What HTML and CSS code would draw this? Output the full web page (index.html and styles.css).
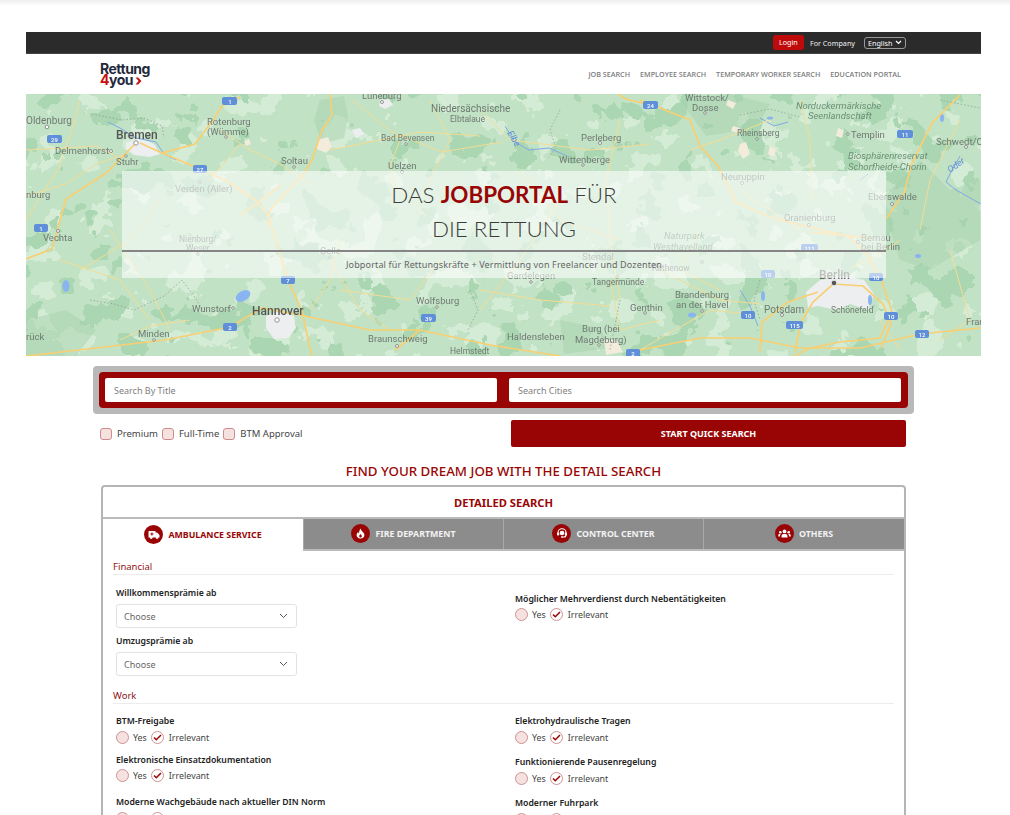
FILE: index.html
```html
<!DOCTYPE html>
<html lang="en">
  <head>
    <meta charset="UTF-8" />
    <title>Rettung4you</title>
    <link rel="stylesheet" href="styles.css">
  </head>
  <body>
    <div class="page">
      <div class="topbar">
        <a class="login">Login</a>
        <a class="company">For Company</a>
        <div class="lang">
          English
          <svg width="7" height="5" viewBox="0 0 7 5"><path d="M1 1l2.5 2.5L6 1" fill="none" stroke="#fff" stroke-width="1.2"/></svg>
        </div>
      </div>

      <header class="header">
        <div class="logo">
          <span>Rettung</span>
          <span><b>4</b>you<svg width="7" height="8" viewBox="0 0 7 8"><path d="M0.5 0.5h2.6L6.5 4 3.1 7.5H0.5L3.6 4z" fill="#c80f0f"/></svg></span>
        </div>
        <nav class="nav">
          <a>JOB SEARCH</a>
          <a>EMPLOYEE SEARCH</a>
          <a>TEMPORARY WORKER SEARCH</a>
          <a>EDUCATION PORTAL</a>
        </nav>
      </header>

      <section class="hero">
        <svg class="map" viewBox="26 94 955 262" width="955" height="262">
          <defs>
            <filter id="patchLight" x="0" y="0" width="100%" height="100%" color-interpolation-filters="sRGB">
              <feTurbulence type="fractalNoise" baseFrequency=".034" numOctaves="4" seed="11"/>
              <feColorMatrix type="matrix" values="0 0 0 0 .83  0 0 0 0 .92  0 0 0 0 .84  1 0 0 0 0"/>
              <feComponentTransfer><feFuncA type="discrete" tableValues="0 0 0 0 0 1 1 1"/></feComponentTransfer>
            </filter>
            <filter id="patchDark" x="0" y="0" width="100%" height="100%" color-interpolation-filters="sRGB">
              <feTurbulence type="fractalNoise" baseFrequency=".03" numOctaves="4" seed="31"/>
              <feColorMatrix type="matrix" values="0 0 0 0 .67  0 0 0 0 .84  0 0 0 0 .70  0 1 0 0 0"/>
              <feComponentTransfer><feFuncA type="discrete" tableValues="0 0 0 0 0 1 1 1"/></feComponentTransfer>
            </filter>
          </defs>
          <rect class="land" x="26" y="94" width="955" height="262"/>
          <rect x="26" y="94" width="955" height="262" filter="url(#patchLight)"/>
          <rect x="26" y="94" width="955" height="262" filter="url(#patchDark)"/>

          <!-- towns -->
          <path class="forest" d="M320 100l24-4 4 20-4 22-22 6-8-24zM880 200l40-40 30 30 30-10 0 60-50 30-30-10zM560 320l40 8 10 20-46 6zM26 320l40-10 30 20-20 26-50 0zM680 100l50-6 40 10-14 24-50 8z"/>
          <path class="urban" d="M126 143l14-5 14 6 6 10-10 3-16-2-8-6zM266 316l14-5 14 5 2 12-8 10-14 1-8-11zM806 292l14-12 24-4 20 4 10 14-6 16-18-6-14 6-18-4-10 2zM380 100l9-1 4 6-8 4-6-3zM352 130l8-2 4 6-8 4z"/>
          <path class="sand" d="M318 140l10-3 4 10-6 6-9-4zM244 141l5-2 2 5-5 2zM740 144l6-2 4 12-7 5-5-8zM770 146l6 3-2 8-6-3zM733 126l7 2-2 5-7-2zM728 100l8 3-3 6-7-4zM838 128l6 2-2 8-6-2zM604 340l12 0 7 12-17 3z"/>
          <!-- water -->
          <g class="lake">
            <ellipse cx="243" cy="296" rx="8" ry="5" transform="rotate(-30 243 296)"/>
            <ellipse cx="66" cy="286" rx="3.500" ry="6"/>
            <ellipse cx="692" cy="315" rx="4" ry="2.500"/>
            <ellipse cx="763" cy="296" rx="2" ry="5"/>
            <ellipse cx="870" cy="300" rx="2" ry="5"/>
            <ellipse cx="918" cy="256" rx="3" ry="2"/>
            <ellipse cx="942" cy="118" rx="2" ry="4"/>
            <ellipse cx="770" cy="118" rx="3" ry="1.500"/>
          </g>
          <path class="river" d="M108 122l12 6 16 10 20 4 8 12 12 6M505 126l10 16 14 8 20-2 18 8M960 156l-8 14-6 12 10 8 25 14M860 180l8-6M760 118l14 8 14-4M740 290l10 16 8 20"/>
          <path class="border" d="M92 114l30 6 22-2 18 8 2 12M90 300l24 4 20 6 30-14 18-16 12 16 10 16M560 110l-10 20 6 18-8 10M740 115l30-6 30 8M760 280l-6 20 6 20M620 300l-6 30-4 20M470 290l8 20-10 20M940 100l40 8"/>
          <!-- roads -->
          <path class="road-minor" d="M26 150l40-2 30-2 20 10M80 100l-8 30-14 40-20 30-12 20M26 196l40-12 30-20 30-10M110 230l40 60 20 40M220 130l30 20 30 14 30 20M240 144l-30 36M352 100l40 32 50 20 60-10M400 140l-10 26 6 20 30 30M330 150l50-10 40-8 60 4M480 110l30 30 80 10 60-6M620 120l-14 60 4 60 10 60M690 150l30-10 50-20M800 100l10 40 2 60M740 190l60 40M900 240l-30 20-20 8M660 270l60 30 40 4M610 280l10 50 40-10M560 200l-40 60-40 50M330 260l30 50 30 20M120 340l30-14 40-6M340 240l-10 40-20 30M960 120l-30 60-10 50M950 250l20 70-30 20M880 320l20 30M640 350l70-40 40 4M480 290l60 10 70 6M430 100l20 40-30 60M520 170l40 50 60 20M700 230l-20 40 40 20M160 200l-30 40-50 30M60 260l60 20 30 40M440 260l-30 40-70-10"/>
          <path class="road" d="M240 97l-18 9-9 14-18 24-33 9-22-10M162 153l38 16 25 11 30 20 13 15 20 65 14 31 10 46M330 94l2 21-10 15-10 30-7 12-35 38-2 15M136 143l-30 30-40 26-14 50-26 10M26 356l139-16 65-13 32-19 38 7 70 15 50 0 70 15 70 11M650 105l-24-6-8-5M640 100l30 12 20 8 10 26 18 20 18 36 36 16 50 12 26 6 18 16 16 30 10 30-12 26-40 4-30 6-24 12M810 232l60 6M795 352l6-30 12-20 20-18 30 2 20 18 8 20-10 24M760 352l2-30 26-20 30-10M640 350l60-12 50 0 50 10 60 0 60-14 60-6M960 95l-28 28-20 40-8 30-18 26M281 185l-40 30M395 350l25-20"/>
          <!-- shields -->
          <g class="shield">
            <rect x="222" y="97" width="15" height="8" rx="2"/><rect x="47" y="135" width="15" height="8" rx="2"/>
            <rect x="193" y="165" width="14" height="8" rx="2"/><rect x="34" y="224" width="14" height="8" rx="2"/>
            <rect x="281" y="276" width="14" height="8" rx="2"/><rect x="223" y="323" width="14" height="8" rx="2"/>
            <rect x="421" y="314" width="15" height="8" rx="2"/><rect x="643" y="101" width="15" height="8" rx="2"/>
            <rect x="897" y="130" width="16" height="8" rx="2"/><rect x="801" y="244" width="17" height="8" rx="2"/>
            <rect x="761" y="270" width="14" height="8" rx="2"/><rect x="869" y="273" width="14" height="8" rx="2"/>
            <rect x="741" y="311" width="14" height="8" rx="2"/><rect x="884" y="312" width="14" height="8" rx="2"/>
            <rect x="786" y="321" width="17" height="8" rx="2"/><rect x="915" y="330" width="14" height="8" rx="2"/>
            <rect x="626" y="349" width="14" height="8" rx="2"/>
          </g>
          <g class="shield-text">
            <text x="230" y="103.5">1</text><text x="54.5" y="141.5">29</text><text x="200" y="171.5">27</text>
            <text x="41" y="230.5">1</text><text x="288" y="282.5">7</text><text x="230" y="329.5">2</text>
            <text x="428.5" y="320.5">39</text><text x="650.5" y="107.5">24</text><text x="905" y="136.5">11</text>
            <text x="809.5" y="250.5">111</text><text x="768" y="276.5">10</text><text x="876" y="279.5">10</text>
            <text x="748" y="317.5">10</text><text x="891" y="318.5">10</text><text x="794.5" y="327.5">115</text>
            <text x="922" y="336.5">12</text><text x="633" y="355.5">2</text>
          </g>
          <!-- places -->
          <g class="dots">
            <circle cx="47" cy="127" r="1.8"/><circle cx="136" cy="143" r="2.2"/><circle cx="111" cy="151" r="1.5"/>
            <circle cx="126" cy="156" r="1.3"/><circle cx="226" cy="137" r="1.3"/><circle cx="294" cy="167" r="1.3"/>
            <circle cx="382" cy="102" r="1.5"/><circle cx="406" cy="144" r="1.3"/><circle cx="402" cy="172" r="1.5"/>
            <circle cx="200" cy="182" r="1.3"/><circle cx="58" cy="231" r="1.5"/><circle cx="198" cy="254" r="1.3"/>
            <circle cx="330" cy="257" r="1.3"/><circle cx="233" cy="308" r="1.3"/><circle cx="277" cy="320" r="2.2"/>
            <circle cx="154" cy="340" r="1.3"/><circle cx="437" cy="307" r="1.3"/><circle cx="397" cy="346" r="1.5"/>
            <circle cx="705" cy="113" r="1.3"/><circle cx="600" cy="143" r="1.5"/><circle cx="583" cy="165" r="1.3"/>
            <circle cx="757" cy="139" r="1.3"/><circle cx="848" cy="134" r="1.3"/><circle cx="966" cy="147" r="1.5"/>
            <circle cx="742" cy="183" r="1.5"/><circle cx="892" cy="204" r="1.5"/><circle cx="809" cy="225" r="1.5"/>
            <circle cx="858" cy="242" r="1.5"/><circle cx="531" cy="282" r="1.3"/><circle cx="617" cy="277" r="1.3"/>
            <circle cx="702" cy="262" r="1.3"/><circle cx="702" cy="311" r="1.3"/><circle cx="645" cy="313" r="1.3"/>
            <circle cx="782" cy="315" r="1.5"/><circle cx="599" cy="345" r="1.3"/>
          </g>
          <circle class="capital" cx="834" cy="283" r="2.8"/>
          <g class="places">
            <text x="362" y="99">Lüneburg</text>
            <text x="26" y="124" class="mid">Oldenburg</text>
            <text x="55" y="154">Delmenhorst</text>
            <text x="116" y="165">Stuhr</text>
            <text x="207" y="125">Rotenburg</text>
            <text x="207" y="135">(Wümme)</text>
            <text x="281" y="164">Soltau</text>
            <text x="381" y="141" class="small">Bad Bevensen</text>
            <text x="388" y="169">Uelzen</text>
            <text x="26" y="198">nburg</text>
            <text x="175" y="192">Verden (Aller)</text>
            <text x="43" y="241">Vechta</text>
            <text x="179" y="242" class="small">Nienburg/</text>
            <text x="186" y="251" class="small">Weser</text>
            <text x="320" y="254">Celle</text>
            <text x="192" y="312">Wunstorf</text>
            <text x="138" y="337">Minden</text>
            <text x="26" y="340">rück</text>
            <text x="416" y="304">Wolfsburg</text>
            <text x="368" y="342">Braunschweig</text>
            <text x="450" y="354" class="small">Helmstedt</text>
            <text x="431" y="112" class="mid">Niedersächsische</text>
            <text x="450" y="122" class="small">Elbtalaue</text>
            <text x="685" y="101">Wittstock/</text>
            <text x="692" y="111">Dosse</text>
            <text x="581" y="141">Perleberg</text>
            <text x="559" y="163">Wittenberge</text>
            <text x="737" y="136" class="small">Rheinsberg</text>
            <text x="851" y="138">Templin</text>
            <text x="936" y="145">Schwedt/O</text>
            <text x="721" y="180">Neuruppin</text>
            <text x="868" y="200">Eberswalde</text>
            <text x="784" y="221">Oranienburg</text>
            <text x="861" y="241">Bernau</text>
            <text x="861" y="250">bei Berlin</text>
            <text x="582" y="260">Stendal</text>
            <text x="652" y="271" class="small">Rathenow</text>
            <text x="507" y="279">Gardelegen</text>
            <text x="592" y="285" class="small">Tangermünde</text>
            <text x="675" y="298">Brandenburg</text>
            <text x="676" y="308">an der Havel</text>
            <text x="630" y="311">Genthin</text>
            <text x="764" y="313" class="mid">Potsdam</text>
            <text x="831" y="313" class="small">Schönefeld</text>
            <text x="966" y="325">Fran</text>
            <text x="582" y="332">Burg (bei</text>
            <text x="575" y="343">Magdeburg)</text>
            <text x="507" y="340">Haldensleben</text>
            <text x="796" y="109" class="park">Norduckermärkische</text>
            <text x="808" y="119" class="park">Seenlandschaft</text>
            <text x="848" y="159" class="park">Biosphärenreservat</text>
            <text x="848" y="170" class="park">Schorfheide-Chorin</text>
            <text x="664" y="239" class="park">Naturpark</text>
            <text x="653" y="250" class="park">Westhavelland</text>
          </g>
          <text class="city" x="116" y="139">Bremen</text>
          <text class="city" x="252" y="315">Hannover</text>
          <text class="capital-name" x="819" y="279">Berlin</text>
          <text class="water-name" transform="translate(507 133) rotate(58)">Elbe</text>
          <text class="water-name" transform="translate(950 173) rotate(-35)">Oder</text>
        </svg>

        <div class="hero-panel">
          <h1 class="hero-title">DAS <b>JOBPORTAL</b> FÜR<br>DIE RETTUNG</h1>
          <hr class="hero-rule" />
          <p class="hero-sub">Jobportal für Rettungskräfte + Vermittlung von Freelancer und Dozenten</p>
        </div>
      </section>

      <div class="quick">
        <div class="quick-inner">
          <input class="quick-input" type="text" placeholder="Search By Title" />
          <input class="quick-input" type="text" placeholder="Search Cities" />
        </div>
      </div>

      <div class="quick-row">
        <div class="checks">
          <label class="check"><span class="box"></span>Premium</label>
          <label class="check"><span class="box"></span>Full-Time</label>
          <label class="check"><span class="box"></span>BTM Approval</label>
        </div>
        <button class="start">START QUICK SEARCH</button>
      </div>

      <h2 class="find">FIND YOUR DREAM JOB WITH THE DETAIL SEARCH</h2>

      <div class="card">
        <h3 class="card-title">DETAILED SEARCH</h3>
        <div class="tabs">
          <div class="tab active">
            <span class="tab-icon"><svg width="12" height="10" viewBox="0 0 12 10"><path d="M1 1h6.5v1.5h1.6L11.5 5v2.5h-1a1.4 1.4 0 0 1-2.8 0H4.6a1.4 1.4 0 0 1-2.8 0H1a.6.6 0 0 1-.5-.6V1.6A.6.6 0 0 1 1 1z" fill="#fff"/><path d="M3.4 2.4h1v1h1v1h-1v1h-1v-1h-1v-1h1z" fill="#990505"/></svg></span>
            AMBULANCE SERVICE
          </div>
          <div class="tab">
            <span class="tab-icon"><svg width="9" height="11" viewBox="0 0 9 11"><path d="M4.6.4c.4 1.7 1.2 2.5 2.2 3.6C7.800 5 8.400 6 8.400 7.100 8.400 9.200 6.700 10.600 4.500 10.600S.6 9.200.6 7.100c0-1.300.7-2.300 1.500-3.100.2.700.5 1.200 1 1.500C3 3.700 3.400 1.800 4.600.4z" fill="#fff"/><path d="M4.500 6c.5.700 1.300 1.200 1.300 2.200 0 .8-.6 1.300-1.300 1.300s-1.300-.5-1.300-1.300C3.200 7.300 4 6.800 4.500 6z" fill="#990505"/></svg></span>
            FIRE DEPARTMENT
          </div>
          <div class="tab">
            <span class="tab-icon"><svg width="12" height="11" viewBox="0 0 12 11"><path d="M2 6V4.800a4 4 0 0 1 8 0V7a2 2 0 0 1-2 2H6.500" fill="none" stroke="#fff" stroke-width="1.100"/><rect x="1" y="4.600" width="2.200" height="3" rx=".8" fill="#fff"/><rect x="8.800" y="4.600" width="2.200" height="3" rx=".8" fill="#fff"/><circle cx="6" cy="5" r="2.300" fill="#fff"/><rect x="5" y="8.300" width="2" height="1.400" rx=".6" fill="#fff"/></svg></span>
            CONTROL CENTER
          </div>
          <div class="tab">
            <span class="tab-icon"><svg width="13" height="9" viewBox="0 0 13 9"><circle cx="6.500" cy="2.400" r="1.900" fill="#fff"/><path d="M3.500 8.500V7a2 2 0 0 1 2-2h2a2 2 0 0 1 2 2v1.500z" fill="#fff"/><circle cx="2.300" cy="3.300" r="1.300" fill="#fff"/><circle cx="10.700" cy="3.300" r="1.300" fill="#fff"/><path d="M.3 7.500V6.300c0-.8.600-1.300 1.300-1.300h1.200c-.6.500-.9 1.200-.9 2v.5zM12.700 7.500V6.300c0-.8-.6-1.300-1.300-1.300h-1.200c.6.500.9 1.200.9 2v.5z" fill="#fff"/></svg></span>
            OTHERS
          </div>
        </div>

        <div class="panel">
          <h4 class="group">Financial</h4>
          <div class="cols">
            <div class="col">
              <div class="field">
                <div class="label">Willkommensprämie ab</div>
                <div class="select">Choose<svg width="9" height="6" viewBox="0 0 9 6"><path d="M1 1l3.500 3.500L8 1" fill="none" stroke="#555" stroke-width="1"/></svg></div>
              </div>
              <div class="field">
                <div class="label">Umzugsprämie ab</div>
                <div class="select">Choose<svg width="9" height="6" viewBox="0 0 9 6"><path d="M1 1l3.500 3.500L8 1" fill="none" stroke="#555" stroke-width="1"/></svg></div>
              </div>
            </div>
            <div class="col right-first">
              <div class="label">Möglicher Mehrverdienst durch Nebentätigkeiten</div>
              <div class="radios">
                <span class="radio"></span>Yes
                <span class="radio on"><svg width="9" height="7" viewBox="0 0 9 7"><path d="M1 3.500l2.300 2.300L8 1" fill="none" stroke="#990505" stroke-width="1.500"/></svg></span>Irrelevant
              </div>
            </div>
          </div>

          <h4 class="group work">Work</h4>
          <div class="cols">
            <div class="col rows-left">
              <div class="row">
                <div class="label">BTM-Freigabe</div>
                <div class="radios">
                  <span class="radio"></span>Yes
                  <span class="radio on"><svg width="9" height="7" viewBox="0 0 9 7"><path d="M1 3.500l2.300 2.300L8 1" fill="none" stroke="#990505" stroke-width="1.500"/></svg></span>Irrelevant
                </div>
              </div>
              <div class="row tight">
                <div class="label">Elektronische Einsatzdokumentation</div>
                <div class="radios">
                  <span class="radio"></span>Yes
                  <span class="radio on"><svg width="9" height="7" viewBox="0 0 9 7"><path d="M1 3.500l2.300 2.300L8 1" fill="none" stroke="#990505" stroke-width="1.500"/></svg></span>Irrelevant
                </div>
              </div>
              <div class="row">
                <div class="label">Moderne Wachgebäude nach aktueller DIN Norm</div>
                <div class="radios">
                  <span class="radio"></span>Yes
                  <span class="radio on"><svg width="9" height="7" viewBox="0 0 9 7"><path d="M1 3.500l2.300 2.300L8 1" fill="none" stroke="#990505" stroke-width="1.500"/></svg></span>Irrelevant
                </div>
              </div>
            </div>
            <div class="col rows-right">
              <div class="row">
                <div class="label">Elektrohydraulische Tragen</div>
                <div class="radios">
                  <span class="radio"></span>Yes
                  <span class="radio on"><svg width="9" height="7" viewBox="0 0 9 7"><path d="M1 3.500l2.300 2.300L8 1" fill="none" stroke="#990505" stroke-width="1.500"/></svg></span>Irrelevant
                </div>
              </div>
              <div class="row">
                <div class="label">Funktionierende Pausenregelung</div>
                <div class="radios">
                  <span class="radio"></span>Yes
                  <span class="radio on"><svg width="9" height="7" viewBox="0 0 9 7"><path d="M1 3.500l2.300 2.300L8 1" fill="none" stroke="#990505" stroke-width="1.500"/></svg></span>Irrelevant
                </div>
              </div>
              <div class="row">
                <div class="label">Moderner Fuhrpark</div>
                <div class="radios">
                  <span class="radio"></span>Yes
                  <span class="radio on"><svg width="9" height="7" viewBox="0 0 9 7"><path d="M1 3.500l2.300 2.300L8 1" fill="none" stroke="#990505" stroke-width="1.500"/></svg></span>Irrelevant
                </div>
              </div>
            </div>
          </div>
        </div>
      </div>
    </div>
  </body>
</html>
```

FILE: styles.css
```css
html {
  overflow: hidden;
}
body {
  margin: 0;
  height: 815px;
  overflow: hidden;
  background: linear-gradient(#eeeeee, #ffffff 6px);
  font-family: "Noto Sans", sans-serif;
  color: #333;
}
.page {
  width: 955px;
  margin-left: 26px;
  padding-top: 32px;
}

/* top bar */
.topbar {
  height: 21px;
  background-color: #2b2b2b;
  border-bottom: 1px solid #444;
  display: flex;
  align-items: center;
  justify-content: flex-end;
  padding-right: 75px;
  font-size: 7.200px;
  color: #f0f0f0;
}
.login {
  width: 31px;
  height: 15px;
  line-height: 15px;
  text-align: center;
  background-color: #c00a0a;
  border-radius: 3px;
  color: #fff;
}
.company {
  margin-left: 6px;
}
.lang {
  margin-left: 9px;
  width: 42px;
  height: 12px;
  box-sizing: border-box;
  border: 1px solid #999;
  border-radius: 3px;
  display: flex;
  align-items: center;
  justify-content: space-between;
  padding: 0 3px;
  color: #fff;
}

/* header */
.header {
  height: 40px;
  background: #fff;
  display: flex;
  align-items: center;
  justify-content: space-between;
  padding: 0 80px 0 74px;
}
.logo {
  display: flex;
  flex-direction: column;
  font-family: Inter, sans-serif;
  font-weight: 700;
  font-size: 14px;
  line-height: 11px;
  letter-spacing: -0.5px;
  color: #1f2a3c;
}
.logo b {
  font-weight: 700;
  color: #c80f0f;
}
.logo svg {
  margin-left: 2px;
}
.nav {
  display: flex;
  gap: 10px;
  font-family: "Open Sans", sans-serif;
  font-size: 7.200px;
  font-weight: 600;
  color: #7d7d7d;
}

/* hero map */
.hero {
  position: relative;
  height: 262px;
  overflow: hidden;
}
.map {
  display: block;
  filter: blur(0.4px);
}
.land {
  fill: #c2e2c5;
}
.urban {
  fill: #eceef0;
}
.sand {
  fill: #f3ebdc;
}
.forest {
  fill: #a3d0aa;
  opacity: 0.45;
}
.lake {
  fill: #8ab4f0;
}
.river {
  fill: none;
  stroke: #7fa9e6;
  stroke-width: 1;
}
.border {
  fill: none;
  stroke: #8a958e;
  stroke-width: 0.7;
  stroke-dasharray: 1.500 2;
}
.road {
  fill: none;
  stroke: #f8cf72;
  stroke-width: 1.700;
}
.road-minor {
  fill: none;
  stroke: #f3dd94;
  stroke-width: 1;
}
.shield {
  fill: #5e8fd8;
}
.shield-text {
  font-family: Roboto, sans-serif;
  font-size: 6px;
  font-weight: 500;
  fill: #fff;
  text-anchor: middle;
}
.dots {
  fill: #fff;
  stroke: #6b6b6b;
  stroke-width: 0.7;
}
.capital {
  fill: #555;
  stroke: #e8e8e8;
  stroke-width: 1;
}
.places {
  font-family: Roboto, sans-serif;
  font-size: 9.500px;
  fill: #6f7a72;
}
.places .small {
  font-size: 8.500px;
}
.places .mid {
  font-size: 10px;
}
.places .park {
  font-size: 9.500px;
  font-style: italic;
  fill: #6a8f74;
}
.city {
  font-family: Roboto, sans-serif;
  font-size: 12px;
  font-weight: 500;
  fill: #555;
}
.capital-name {
  font-family: Roboto, sans-serif;
  font-size: 12px;
  font-weight: 500;
  fill: #666;
}
.water-name {
  font-family: Roboto, sans-serif;
  font-style: italic;
  font-size: 9px;
  fill: #5f8fd8;
}
.hero-panel {
  position: absolute;
  left: 96px;
  top: 77px;
  width: 764px;
  height: 107px;
  background: rgba(255, 255, 255, 0.58);
  text-align: center;
}
.hero-title {
  margin: 7px 0 0;
  font-family: Lato, sans-serif;
  font-size: 22.400px;
  font-weight: 300;
  line-height: 34px;
  color: #3c3c3c;
}
.hero-title b {
  font-weight: 700;
  color: #990505;
}
.hero-rule {
  margin: 4px 0 0;
  border: none;
  height: 1.500px;
  background-color: #858585;
}
.hero-sub {
  margin: 6px 0 0;
  font-size: 9px;
  line-height: 14px;
  letter-spacing: 0.15px;
  color: #666;
}

/* quick search */
.quick {
  margin: 10px 67px 0;
  padding: 6px;
  background-color: #b9b9b9;
  border-radius: 4px;
}
.quick-inner {
  display: grid;
  grid-template-columns: 392px 392px;
  column-gap: 12px;
  padding: 6px;
  background-color: #990505;
  border-radius: 4px;
}
.quick-input {
  height: 24px;
  box-sizing: border-box;
  border: none;
  border-radius: 2px;
  padding: 0 9px;
  font-family: "Noto Sans", sans-serif;
  font-size: 9px;
  background: #fff;
}
.quick-input::placeholder {
  color: #808080;
}
.quick-row {
  display: flex;
  justify-content: space-between;
  margin: 6px 75px 0;
  height: 27px;
}
.checks {
  display: flex;
  align-items: center;
  gap: 4px;
  margin-left: -1px;
}
.check {
  display: flex;
  align-items: center;
  gap: 5px;
  font-size: 9.500px;
  color: #444;
}
.box {
  width: 10px;
  height: 10px;
  border: 1px solid #d08a8a;
  border-radius: 3px;
  background-color: #f6e1e1;
}
.start {
  width: 395px;
  border: none;
  border-radius: 2px;
  background-color: #990505;
  color: #fff;
  font-family: "Noto Sans", sans-serif;
  font-size: 9px;
  font-weight: 700;
}
.find {
  margin: 16px 0 0;
  text-align: center;
  font-size: 13.300px;
  line-height: 16px;
  font-weight: 500;
  color: #990505;
}

/* detailed search card */
.card {
  margin: 6px 75px 0;
  border: 2px solid #b5b5b5;
  border-radius: 4px;
  background: #fff;
}
.card-title {
  margin: 0;
  height: 30px;
  line-height: 31px;
  text-align: center;
  font-size: 11.200px;
  font-weight: 700;
  color: #990505;
}
.tabs {
  display: grid;
  grid-template-columns: 200px 200px 200px 1fr;
  height: 30px;
  border-top: 2px solid #bbb;
  background-color: #8c8c8c;
  border-bottom: 2px solid #bbb;
}
.tab {
  display: flex;
  align-items: center;
  justify-content: center;
  gap: 5px;
  padding-bottom: 1px;
  font-size: 8.800px;
  font-weight: 700;
  color: #f2f2f2;
  border-left: 1px solid #a8a8a8;
}
.tab.active {
  color: #990505;
  background: #fff;
  border-left: none;
  margin-bottom: -2px;
}
.tab-icon {
  width: 19px;
  height: 19px;
  border-radius: 50%;
  background-color: #990505;
  display: flex;
  align-items: center;
  justify-content: center;
}
.panel {
  padding: 9px 10px 0;
}
.group {
  margin: 0;
  padding-bottom: 1px;
  border-bottom: 1px solid #ececec;
  font-size: 9.500px;
  line-height: 13px;
  font-weight: 400;
  color: #8f1414;
}
.group.work {
  margin-top: 13px;
}
.cols {
  display: grid;
  grid-template-columns: 399px 1fr;
  padding-left: 3px;
}
.label {
  padding-top: 1px;
  font-size: 8.700px;
  line-height: 13px;
  font-weight: 600;
  color: #222;
}
.field {
  margin-top: 5px;
}
.field + .field {
  margin-top: 6px;
}
.col:first-child .field:first-child {
  margin-top: 11px;
}
.select {
  margin-top: 4px;
  width: 181px;
  height: 24px;
  box-sizing: border-box;
  border: 1px solid #e2e2e2;
  border-radius: 3px;
  display: flex;
  align-items: center;
  justify-content: space-between;
  padding: 0 8px 0 7px;
  font-size: 9px;
  color: #666;
}
.right-first {
  padding-top: 17px;
}
.right-first .radios {
  margin-top: 2px;
}
.radios {
  display: flex;
  align-items: center;
  gap: 4px;
  margin-top: 3px;
  height: 13px;
  font-size: 8.900px;
  color: #444;
}
.radio {
  width: 11px;
  height: 11px;
  border: 1px solid #cf9292;
  border-radius: 50%;
  background-color: #f6e1e1;
  display: flex;
  align-items: center;
  justify-content: center;
}
.radio.on {
  margin-right: 1px;
  background-color: #fff;
}
.rows-left .row:first-child,
.rows-right .row:first-child {
  margin-top: 10px;
}
.rows-left .row.tight {
  margin-top: 9px;
}
.rows-left .row.tight .radios {
  margin-top: 2px;
}
.rows-left .row:last-child {
  margin-top: 13px;
}
.rows-right .row {
  margin-top: 11px;
}
```
